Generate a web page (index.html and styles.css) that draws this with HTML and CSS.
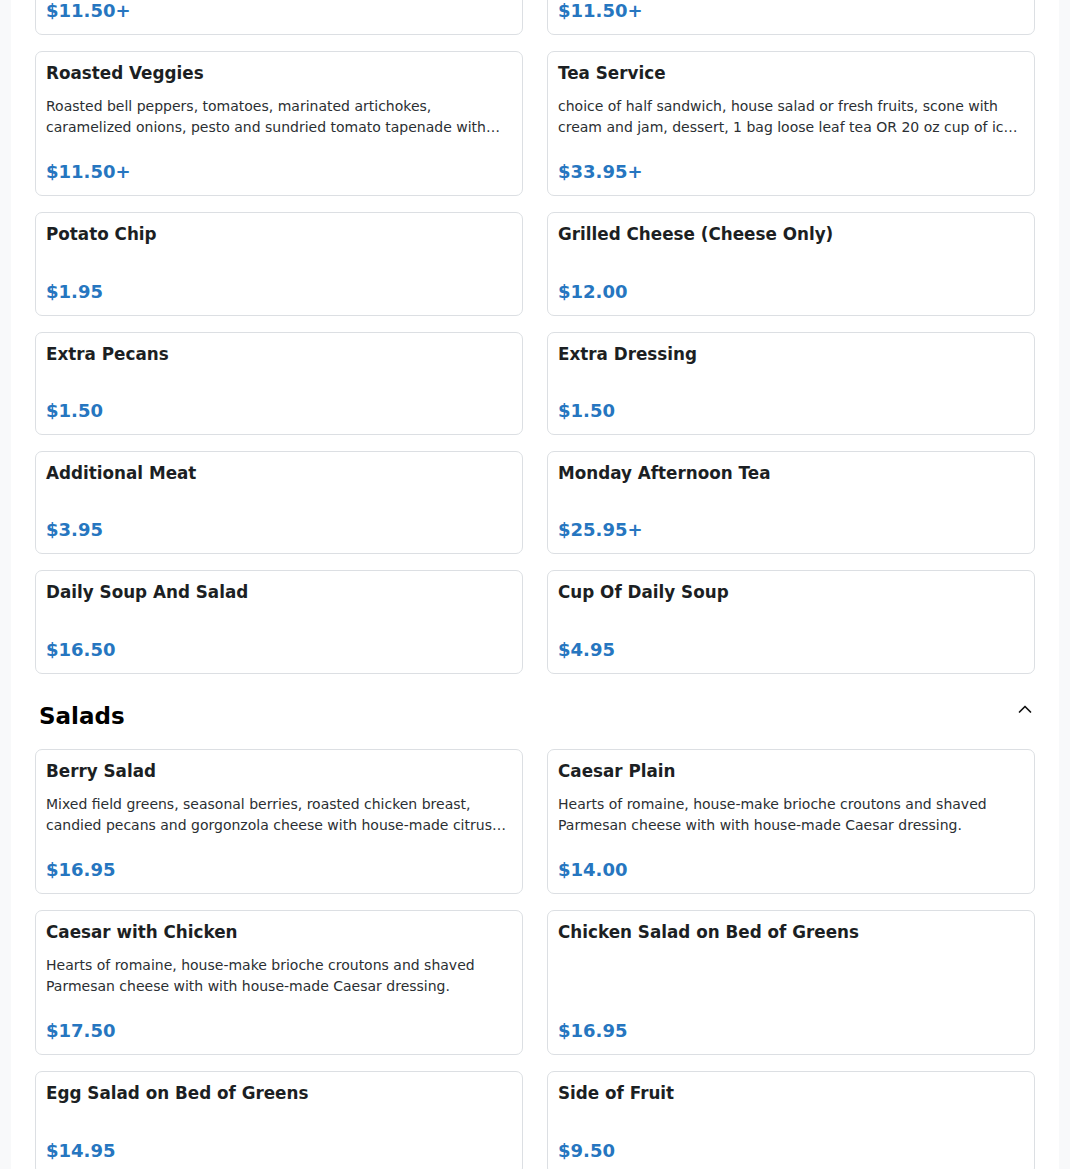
FILE: index.html
```html
<!DOCTYPE html>
<html lang="en">
<head>
<meta charset="utf-8">
<title>Menu</title>
<link rel="stylesheet" href="styles.css">
</head>
<body>
<main class="panel">
  <section class="section section-first">
    <div class="grid">
      <div class="card card-cut"><div class="price">$11.50+</div></div>
      <div class="card card-cut"><div class="price">$11.50+</div></div>
      <div class="card">
        <h3 class="title">Roasted Veggies</h3>
        <p class="desc">Roasted bell peppers, tomatoes, marinated artichokes, caramelized onions, pesto and sundried tomato tapenade with provolone cheese on focaccia bread.</p>
        <div class="price">$11.50+</div>
      </div>
      <div class="card">
        <h3 class="title">Tea Service</h3>
        <p class="desc">choice of half sandwich, house salad or fresh fruits, scone with cream and jam, dessert, 1 bag loose leaf tea OR 20 oz cup of iced tea.</p>
        <div class="price">$33.95+</div>
      </div>
      <div class="card">
        <h3 class="title">Potato Chip</h3>
        <div class="price">$1.95</div>
      </div>
      <div class="card">
        <h3 class="title">Grilled Cheese (Cheese Only)</h3>
        <div class="price">$12.00</div>
      </div>
      <div class="card">
        <h3 class="title">Extra Pecans</h3>
        <div class="price">$1.50</div>
      </div>
      <div class="card">
        <h3 class="title">Extra Dressing</h3>
        <div class="price">$1.50</div>
      </div>
      <div class="card">
        <h3 class="title">Additional Meat</h3>
        <div class="price">$3.95</div>
      </div>
      <div class="card">
        <h3 class="title">Monday Afternoon Tea</h3>
        <div class="price">$25.95+</div>
      </div>
      <div class="card">
        <h3 class="title">Daily Soup And Salad</h3>
        <div class="price">$16.50</div>
      </div>
      <div class="card">
        <h3 class="title">Cup Of Daily Soup</h3>
        <div class="price">$4.95</div>
      </div>
    </div>
  </section>

  <section class="section">
    <div class="section-head">
      <h2 class="section-title">Salads</h2>
      <svg class="chevron" width="14" height="10" viewBox="0 0 14 10" aria-hidden="true"><polyline points="1.5,8 7,2.5 12.5,8" fill="none" stroke="#111" stroke-width="1.7" stroke-linecap="round" stroke-linejoin="round"/></svg>
    </div>
    <div class="grid">
      <div class="card">
        <h3 class="title">Berry Salad</h3>
        <p class="desc">Mixed field greens, seasonal berries, roasted chicken breast, candied pecans and gorgonzola cheese with house-made citrus vinaigrette.</p>
        <div class="price">$16.95</div>
      </div>
      <div class="card">
        <h3 class="title">Caesar Plain</h3>
        <p class="desc">Hearts of romaine, house-make brioche croutons and shaved Parmesan cheese with with house-made Caesar dressing.</p>
        <div class="price">$14.00</div>
      </div>
      <div class="card">
        <h3 class="title">Caesar with Chicken</h3>
        <p class="desc">Hearts of romaine, house-make brioche croutons and shaved Parmesan cheese with with house-made Caesar dressing.</p>
        <div class="price">$17.50</div>
      </div>
      <div class="card">
        <h3 class="title">Chicken Salad on Bed of Greens</h3>
        <div class="price">$16.95</div>
      </div>
      <div class="card">
        <h3 class="title">Egg Salad on Bed of Greens</h3>
        <div class="price">$14.95</div>
      </div>
      <div class="card">
        <h3 class="title">Side of Fruit</h3>
        <div class="price">$9.50</div>
      </div>
    </div>
  </section>
</main>
</body>
</html>
```
FILE: styles.css
```css
html, body {
  margin: 0;
  padding: 0;
}
body {
  background: #f8f9fa;
  font-family: "DejaVu Sans", "Noto Sans", sans-serif;
  color: #212529;
}
.panel {
  width: 1048px;
  margin: 0 auto;
  background: #fff;
  padding: 0 24px 40px;
  box-sizing: border-box;
  min-height: 1169px;
}
.section-first {
  margin-top: -34px;
}
.grid {
  display: grid;
  grid-template-columns: 1fr 1fr;
  column-gap: 24px;
  row-gap: 16px;
}
.card {
  display: flex;
  flex-direction: column;
  border: 1px solid #dcdfe3;
  border-radius: 7px;
  padding: 10px;
  background: #fff;
}
.title {
  margin: 0 0 12px;
  font-size: 16.8px;
  line-height: 22.33px;
  font-weight: 700;
  color: #1c1f23;
}
.desc {
  margin: 0;
  font-size: 14px;
  line-height: 21px;
  color: #2b2f33;
  display: -webkit-box;
  -webkit-line-clamp: 2;
  -webkit-box-orient: vertical;
  overflow: hidden;
}
.price {
  margin-top: auto;
  padding-top: 20px;
  font-size: 18px;
  line-height: 27px;
  font-weight: 700;
  color: #2676c0;
}
.section-head {
  display: flex;
  align-items: center;
  justify-content: space-between;
  padding: 28px 3px 18px 4px;
}
.section-title {
  margin: 0;
  font-size: 23px;
  line-height: 29px;
  font-weight: 700;
  color: #000;
}
.chevron {
  display: block;
  margin-top: -14px;
}
```
